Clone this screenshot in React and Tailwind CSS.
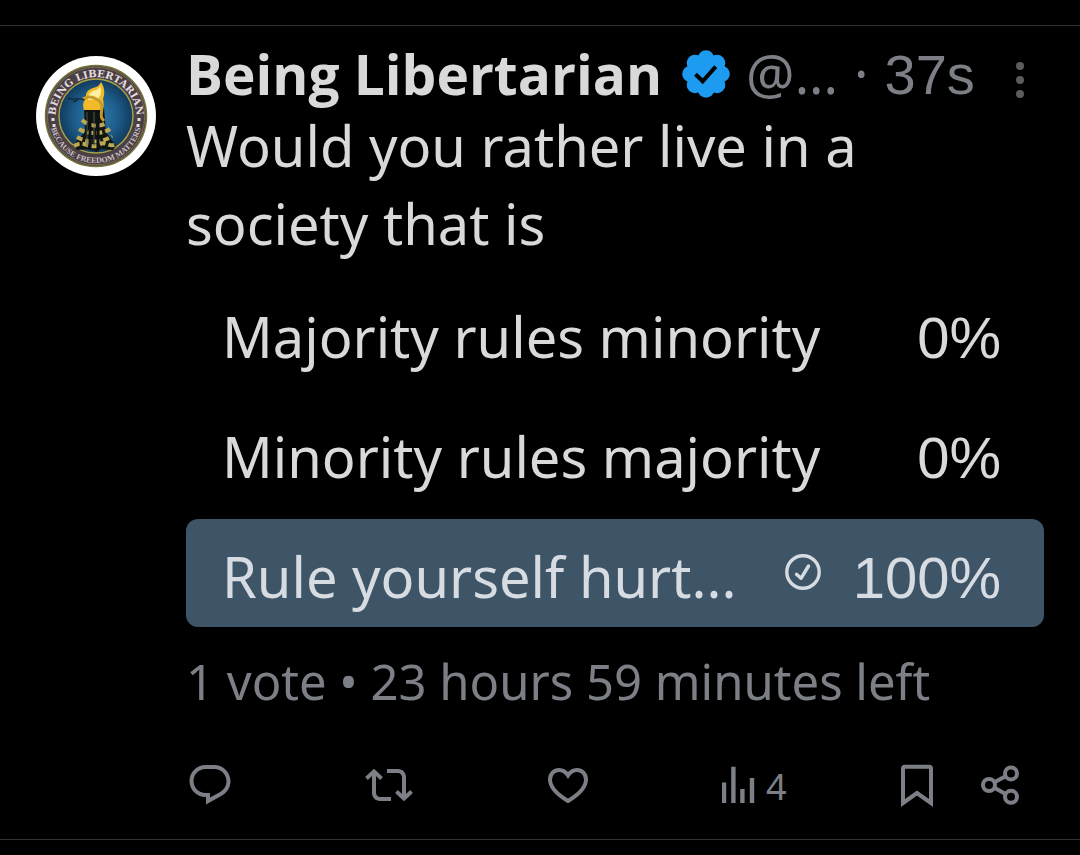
import React from "react";

const ACTIONS = [
  {
    label: "Reply",
    icon: (
      <path
        fill="currentColor"
        d="M1.751 10c0-4.42 3.584-8 8.005-8h4.366c4.49 0 8.129 3.64 8.129 8.13 0 2.96-1.607 5.68-4.196 7.11l-8.054 4.46v-3.69h-.067c-4.49.1-8.183-3.51-8.183-8.01zm8.005-6c-3.317 0-6.005 2.69-6.005 6 0 3.37 2.77 6.08 6.138 6.01l.351-.01h1.761v2.3l5.087-2.81c1.951-1.08 3.163-3.13 3.163-5.36 0-3.39-2.744-6.13-6.129-6.13H9.756z"
      />
    ),
  },
  {
    label: "Repost",
    icon: (
      <path
        fill="currentColor"
        d="M4.5 3.88l4.432 4.14-1.364 1.46L5.5 7.55V16c0 1.1.896 2 2 2H13v2H7.5c-2.209 0-4-1.79-4-4V7.55L1.432 9.48.068 8.02 4.5 3.88zM16.5 6H11V4h5.5c2.209 0 4 1.79 4 4v8.45l2.068-1.93 1.364 1.46-4.432 4.14-4.432-4.14 1.364-1.46 2.068 1.93V8c0-1.1-.896-2-2-2z"
      />
    ),
  },
  {
    label: "Like",
    icon: (
      <path
        fill="none"
        stroke="currentColor"
        strokeWidth="2"
        d="M12 7.2C10.8 5.4 9.2 4.5 7.6 4.5 5 4.5 3 6.5 3 9.3 3 13.4 6.6 16.8 12 20c5.4-3.2 9-6.6 9-10.7 0-2.8-2-4.8-4.6-4.8-1.6 0-3.2.9-4.4 2.7z"
      />
    ),
  },
  {
    label: "Views",
    count: "4",
    icon: (
      <path
        fill="currentColor"
        d="M3 10.800h2.100V21H3zM7.600 2.900h2.200V21H7.600zM12.100 14h2.200v7h-2.200zM16.900 8.500h2.200V21h-2.200z"
      />
    ),
  },
];

const OPTIONS = [
  { text: "Majority rules minority", percent: "0%" },
  { text: "Minority rules majority", percent: "0%" },
  { text: "Rule yourself hurt...", percent: "100%", chosen: true },
];

function Icon({ children }) {
  return (
    <svg viewBox="0 0 24 24" className="size-12 shrink-0" aria-hidden="true">
      {children}
    </svg>
  );
}

function Avatar() {
  return (
    <svg viewBox="0 0 120 120" className="size-30 shrink-0" role="img" aria-label="Being Libertarian">
      <defs>
        <radialGradient id="sea">
          <stop offset="0" stopColor="#2f7fae" />
          <stop offset="0.6" stopColor="#1d5d8b" />
          <stop offset="1" stopColor="#123a5c" />
        </radialGradient>
        <path id="arcTop" d="M20 68A40.500 40.500 0 1 1 100 68" />
        <path id="arcBottom" d="M14 66A46.300 46.300 0 0 0 106 66" />
      </defs>
      <circle cx="60" cy="60" r="60" fill="#fff" />
      <circle cx="60" cy="60" r="50.500" fill="#4a3f43" stroke="#77743f" strokeWidth="1.500" />
      <circle cx="60" cy="60" r="48.800" fill="none" stroke="#8f8a5a" strokeWidth="0.6" />
      <circle cx="60" cy="60" r="37" fill="url(#sea)" stroke="#a5a348" strokeWidth="1.500" />
      <text fill="#e4dde0" className="font-['DejaVu_Serif',serif] text-[10px] font-bold">
        <textPath href="#arcTop" startOffset="50%" textAnchor="middle">BEING LIBERTARIAN</textPath>
      </text>
      <text fill="#c9bfc3" className="font-[Liberation_Serif,serif] text-[8px] font-bold">
        <textPath href="#arcBottom" startOffset="50%" textAnchor="middle">BECAUSE FREEDOM MATTERS</textPath>
      </text>
      <g fill="#e4dde0">
        <rect x="15.500" y="62" width="3" height="3" />
        <rect x="16.500" y="68" width="3" height="3" />
        <rect x="101.500" y="62" width="3" height="3" />
        <rect x="100.500" y="68" width="3" height="3" />
      </g>
      <path fill="#111610" d="M48 52h20l2 24 10 14-3 4-12-1-4 3-8-3-12 1-4-5 12-13z" />
      <path fill="#f2b928" d="M48 54c-2-6 0-9 2-14 0-4 2-6 7-8 4-1 6-2 8-6 4 6 4 12 2 17 1 4 1 8-1 11z" />
      <path fill="#fff0a0" d="M52 44c0-5 2-8 5-9 4-1 6-2 7-5 2 5 1 9-2 13z" />
      <path fill="none" stroke="#c99a2a" strokeWidth="3" d="M47 43c8-5 18 1 19 7 0 8-3 10 2 15" />
      <path stroke="#10191d" strokeWidth="1" fill="none" d="M32 42c5 3 9-1 17 2M37 46l5-2" />
      <path fill="none" stroke="#bda954" strokeWidth="4" strokeDasharray="6 3" d="M46 64c8 7 18 7 25 3M43 73c8 5 22 6 31 0M41 81c12 7 27 5 35-1M38 90c10-7 16 4 25-1 6-5 10 3 17-1" />
      <path stroke="#0c1113" strokeWidth="3" d="M54 54v40M62 54v40" />
      <path stroke="#56635a" strokeWidth="0.8" d="M51 56v34M58 56v34" />
    </svg>
  );
}

function VerifiedBadge() {
  return (
    <svg viewBox="0 0 48 48" className="size-12 shrink-0" role="img" aria-label="Verified account">
      <g fill="#1d9bf0">
        <circle cx="24" cy="24" r="18.500" />
        <circle cx="24" cy="8.500" r="8.300" />
        <circle cx="35" cy="13" r="8.300" />
        <circle cx="39.500" cy="24" r="8.300" />
        <circle cx="35" cy="35" r="8.300" />
        <circle cx="24" cy="39.500" r="8.300" />
        <circle cx="13" cy="35" r="8.300" />
        <circle cx="8.500" cy="24" r="8.300" />
        <circle cx="13" cy="13" r="8.300" />
      </g>
      <path d="M13.500 24.300l7.200 7 13-14.600" fill="none" stroke="#000" strokeWidth="4" />
    </svg>
  );
}

function ChosenMark() {
  return (
    <svg viewBox="0 0 36 36" className="mb-2 size-9 shrink-0" role="img" aria-label="Your vote">
      <circle cx="18" cy="18" r="16.200" fill="none" stroke="currentColor" strokeWidth="3.400" />
      <path d="M11.500 20.300l4.500 4 7.500-12.300" fill="none" stroke="currentColor" strokeWidth="3.400" strokeLinecap="round" strokeLinejoin="round" />
    </svg>
  );
}

export default function App() {
  return (
    <main className="min-h-screen bg-black pt-[25px] font-['Noto_Sans',sans-serif] text-[#d9d9d9]">
      <article className="flex gap-[30px] border-y border-[#2f3336] px-9 pt-4 pb-[30px]">
        <div className="pt-3.5">
          <Avatar />
        </div>
        <div className="min-w-0 flex-1">
          <header className="flex h-16 items-center whitespace-nowrap">
            <h1 className="font-['Open_Sans',sans-serif] text-[55px] leading-[64px] font-bold">Being Libertarian</h1>
            <span className="ml-5 flex">
              <VerifiedBadge />
            </span>
            <p className="ml-4 flex items-baseline gap-4 text-[54px] leading-[64px] text-[#7c8086]">
              <span>@...</span>
              <span>·</span>
              <time className="font-['Liberation_Sans',sans-serif] text-[56px]">37s</time>
            </p>
            <button type="button" aria-label="More" className="ml-auto flex w-12 justify-center pt-3 text-[#5c5c5c]">
              <svg viewBox="0 0 8 36" className="h-9 w-2" fill="currentColor" aria-hidden="true">
                <circle cx="4" cy="4" r="4" />
                <circle cx="4" cy="18" r="4" />
                <circle cx="4" cy="32" r="4" />
              </svg>
            </button>
          </header>

          <p className="pr-24 text-[56px] leading-[78px]">Would you rather live in a society that is</p>

          <ul className="mt-[17px] flex flex-col gap-3">
            {OPTIONS.map((option) => (
              <li
                key={option.text}
                className={`flex h-27 items-center rounded-xl pt-1.5 pr-[43px] pl-9 text-[56px] leading-[78px] whitespace-nowrap ${option.chosen ? "bg-[#3e5467] text-[#d6dce1]" : ""}`}
              >
                <span className="flex-1">{option.text}</span>
                {option.chosen && <ChosenMark />}
                <span className="ml-8 pt-1 font-['Liberation_Sans',sans-serif] text-[58px]">{option.percent}</span>
              </li>
            ))}
          </ul>

          <p className="mt-[18px] text-[49px] leading-[72px] whitespace-nowrap text-[#7c8086]">
            1 vote • 23 hours 59 minutes left
          </p>

          <footer className="mt-11 grid grid-cols-[179fr_179fr_172fr_177fr_auto] pr-5 text-[#7c8086]">
            {ACTIONS.map((action) => (
              <button key={action.label} type="button" aria-label={action.label} className="flex h-12 items-center">
                <Icon>{action.icon}</Icon>
                {action.count && <span className="pt-1 pl-0.5 text-4xl leading-12">{action.count}</span>}
              </button>
            ))}
            <div className="flex gap-[35px]">
              <button type="button" aria-label="Bookmark">
                <Icon>
                  <path fill="none" stroke="currentColor" strokeWidth="2" d="M5 21V3.900Q5 2.900 6 2.900H18Q19 2.900 19 3.900V21L12 16z" />
                </Icon>
              </button>
              <button type="button" aria-label="Share">
                <Icon>
                  <g fill="none" stroke="currentColor" strokeWidth="2">
                    <circle cx="6.500" cy="12" r="3" />
                    <circle cx="17.500" cy="6.200" r="3" />
                    <circle cx="17.500" cy="17.900" r="3" />
                    <path d="M9.200 10.600l5.600-3M9.200 13.400l5.600 3.100" />
                  </g>
                </Icon>
              </button>
            </div>
          </footer>
        </div>
      </article>
    </main>
  );
}
